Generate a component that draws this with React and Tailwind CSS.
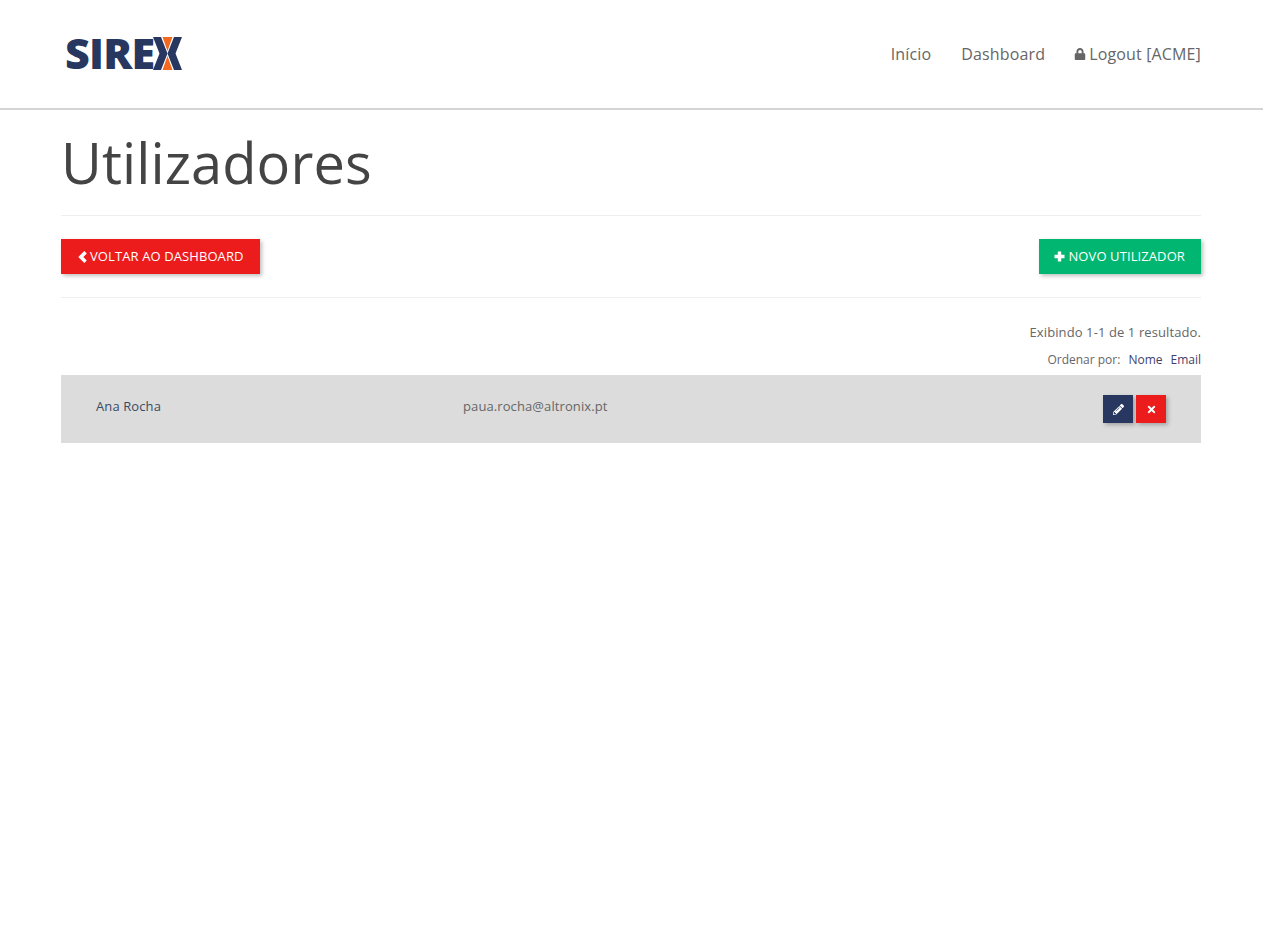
import { FaLock, FaPencilAlt, FaTimes } from "react-icons/fa";

function Logo() {
  return (
    <div className="flex items-center h-[34px] text-[#27375f]">
      <span className="font-['Open_Sans',sans-serif] font-extrabold text-[43px] leading-[34px] tracking-[-0.8px]">
        SIRE
      </span>
      <svg width="29" height="33" viewBox="0 0 29 33" className="ml-[-1px]">
        <path d="M0 0h8l6.500 16.500L8 33H0l6.500-16.500z" fill="#27375f" />
        <path d="M29 0h-8l-6.500 16.500L21 33h8l-6.500-16.500z" fill="#27375f" />
        <path d="M9.500 0h10l-5 14zM9.500 33h10l-5-14z" fill="#f26a21" />
      </svg>
    </div>
  );
}

// chevron and plus are heavier than the icon package's versions at this size
function ChevronLeftBold() {
  return (
    <svg width="10" height="12" viewBox="0 0 10 12" fill="currentColor">
      <path d="M6.300 0 8.800 2.500 5.300 6l3.500 3.500L6.300 12 0.300 6z" />
    </svg>
  );
}

function PlusBold() {
  return (
    <svg width="11" height="11" viewBox="0 0 11 11" fill="currentColor">
      <path d="M3.800 0.500h3.400v3.300h3.300v3.400H7.200v3.300H3.800V7.200H0.500V3.800h3.300z" />
    </svg>
  );
}

function App() {
  return (
    <div className="min-h-[933px] bg-white font-['Open_Sans',sans-serif] text-[#666]">
      <header className="h-[110px] border-b-2 border-[#d4d4d4] bg-white">
        <div className="ml-[61px] w-[1140px] h-[108px] flex items-center justify-between">
          <div className="pl-[4px] pb-[2px]">
            <Logo />
          </div>
          <nav className="flex items-center gap-[30px] text-[16px] tracking-[0.15px] text-[#666]">
            <a>Início</a>
            <a>Dashboard</a>
            <a className="flex items-center gap-[3px] ml-[-1px]">
              <FaLock className="text-[12px]" />
              Logout [ACME]
            </a>
          </nav>
        </div>
      </header>

      <main className="ml-[61px] w-[1140px]">
        <h1 className="text-[56px] tracking-[0.1px] leading-[66px] text-[#444] pt-[19px] pb-[20px] border-b border-[#eee]">
          Utilizadores
        </h1>
        <div className="flex justify-between py-[23px] border-b border-[#eee]">
          <a className="h-[35px] pl-[17px] pr-[16px] flex items-center gap-[2px] bg-[#ed1c1c] text-white text-[13px] tracking-[0.1px] font-medium shadow-[2px_2px_4px_rgba(0,0,0,0.25)]">
            <ChevronLeftBold />
            VOLTAR AO DASHBOARD
          </a>
          <a className="h-[35px] pl-[15px] pr-[16px] flex items-center gap-[3px] bg-[#00b671] text-white text-[13px] tracking-[0.1px] font-medium shadow-[2px_2px_4px_rgba(0,0,0,0.25)]">
            <PlusBold />
            NOVO UTILIZADOR
          </a>
        </div>
        <p className="text-right text-[13px] tracking-[0.1px] leading-[18px] mt-[25px]">
          Exibindo 1-1 de 1 resultado.
        </p>
        <div className="flex justify-end gap-[8px] text-[12px] leading-[16px] mt-[11px]">
          <span>Ordenar por:</span>
          <a className="text-[#3f3f6b]">Nome</a>
          <a className="text-[#3f3f6b]">Email</a>
        </div>
        <div className="mt-[7px] h-[68px] bg-[#dcdcdc] flex items-start px-[35px] text-[13px] tracking-[0.1px]">
          <div className="w-[367px] pt-[22px] leading-[18px] text-[#3c4a63]">Ana Rocha</div>
          <div className="flex-1 pt-[22px] leading-[18px]">paua.rocha@altronix.pt</div>
          <div className="flex gap-[3px] pt-[20px]">
            <a className="w-[30px] h-[28px] flex items-center justify-center bg-[#27375f] text-white text-[11px] shadow-[2px_2px_4px_rgba(0,0,0,0.25)]">
              <FaPencilAlt />
            </a>
            <a className="w-[30px] h-[28px] flex items-center justify-center bg-[#ed1c1c] text-white text-[11px] shadow-[2px_2px_4px_rgba(0,0,0,0.25)]">
              <FaTimes />
            </a>
          </div>
        </div>
      </main>
    </div>
  );
}

export default App;
